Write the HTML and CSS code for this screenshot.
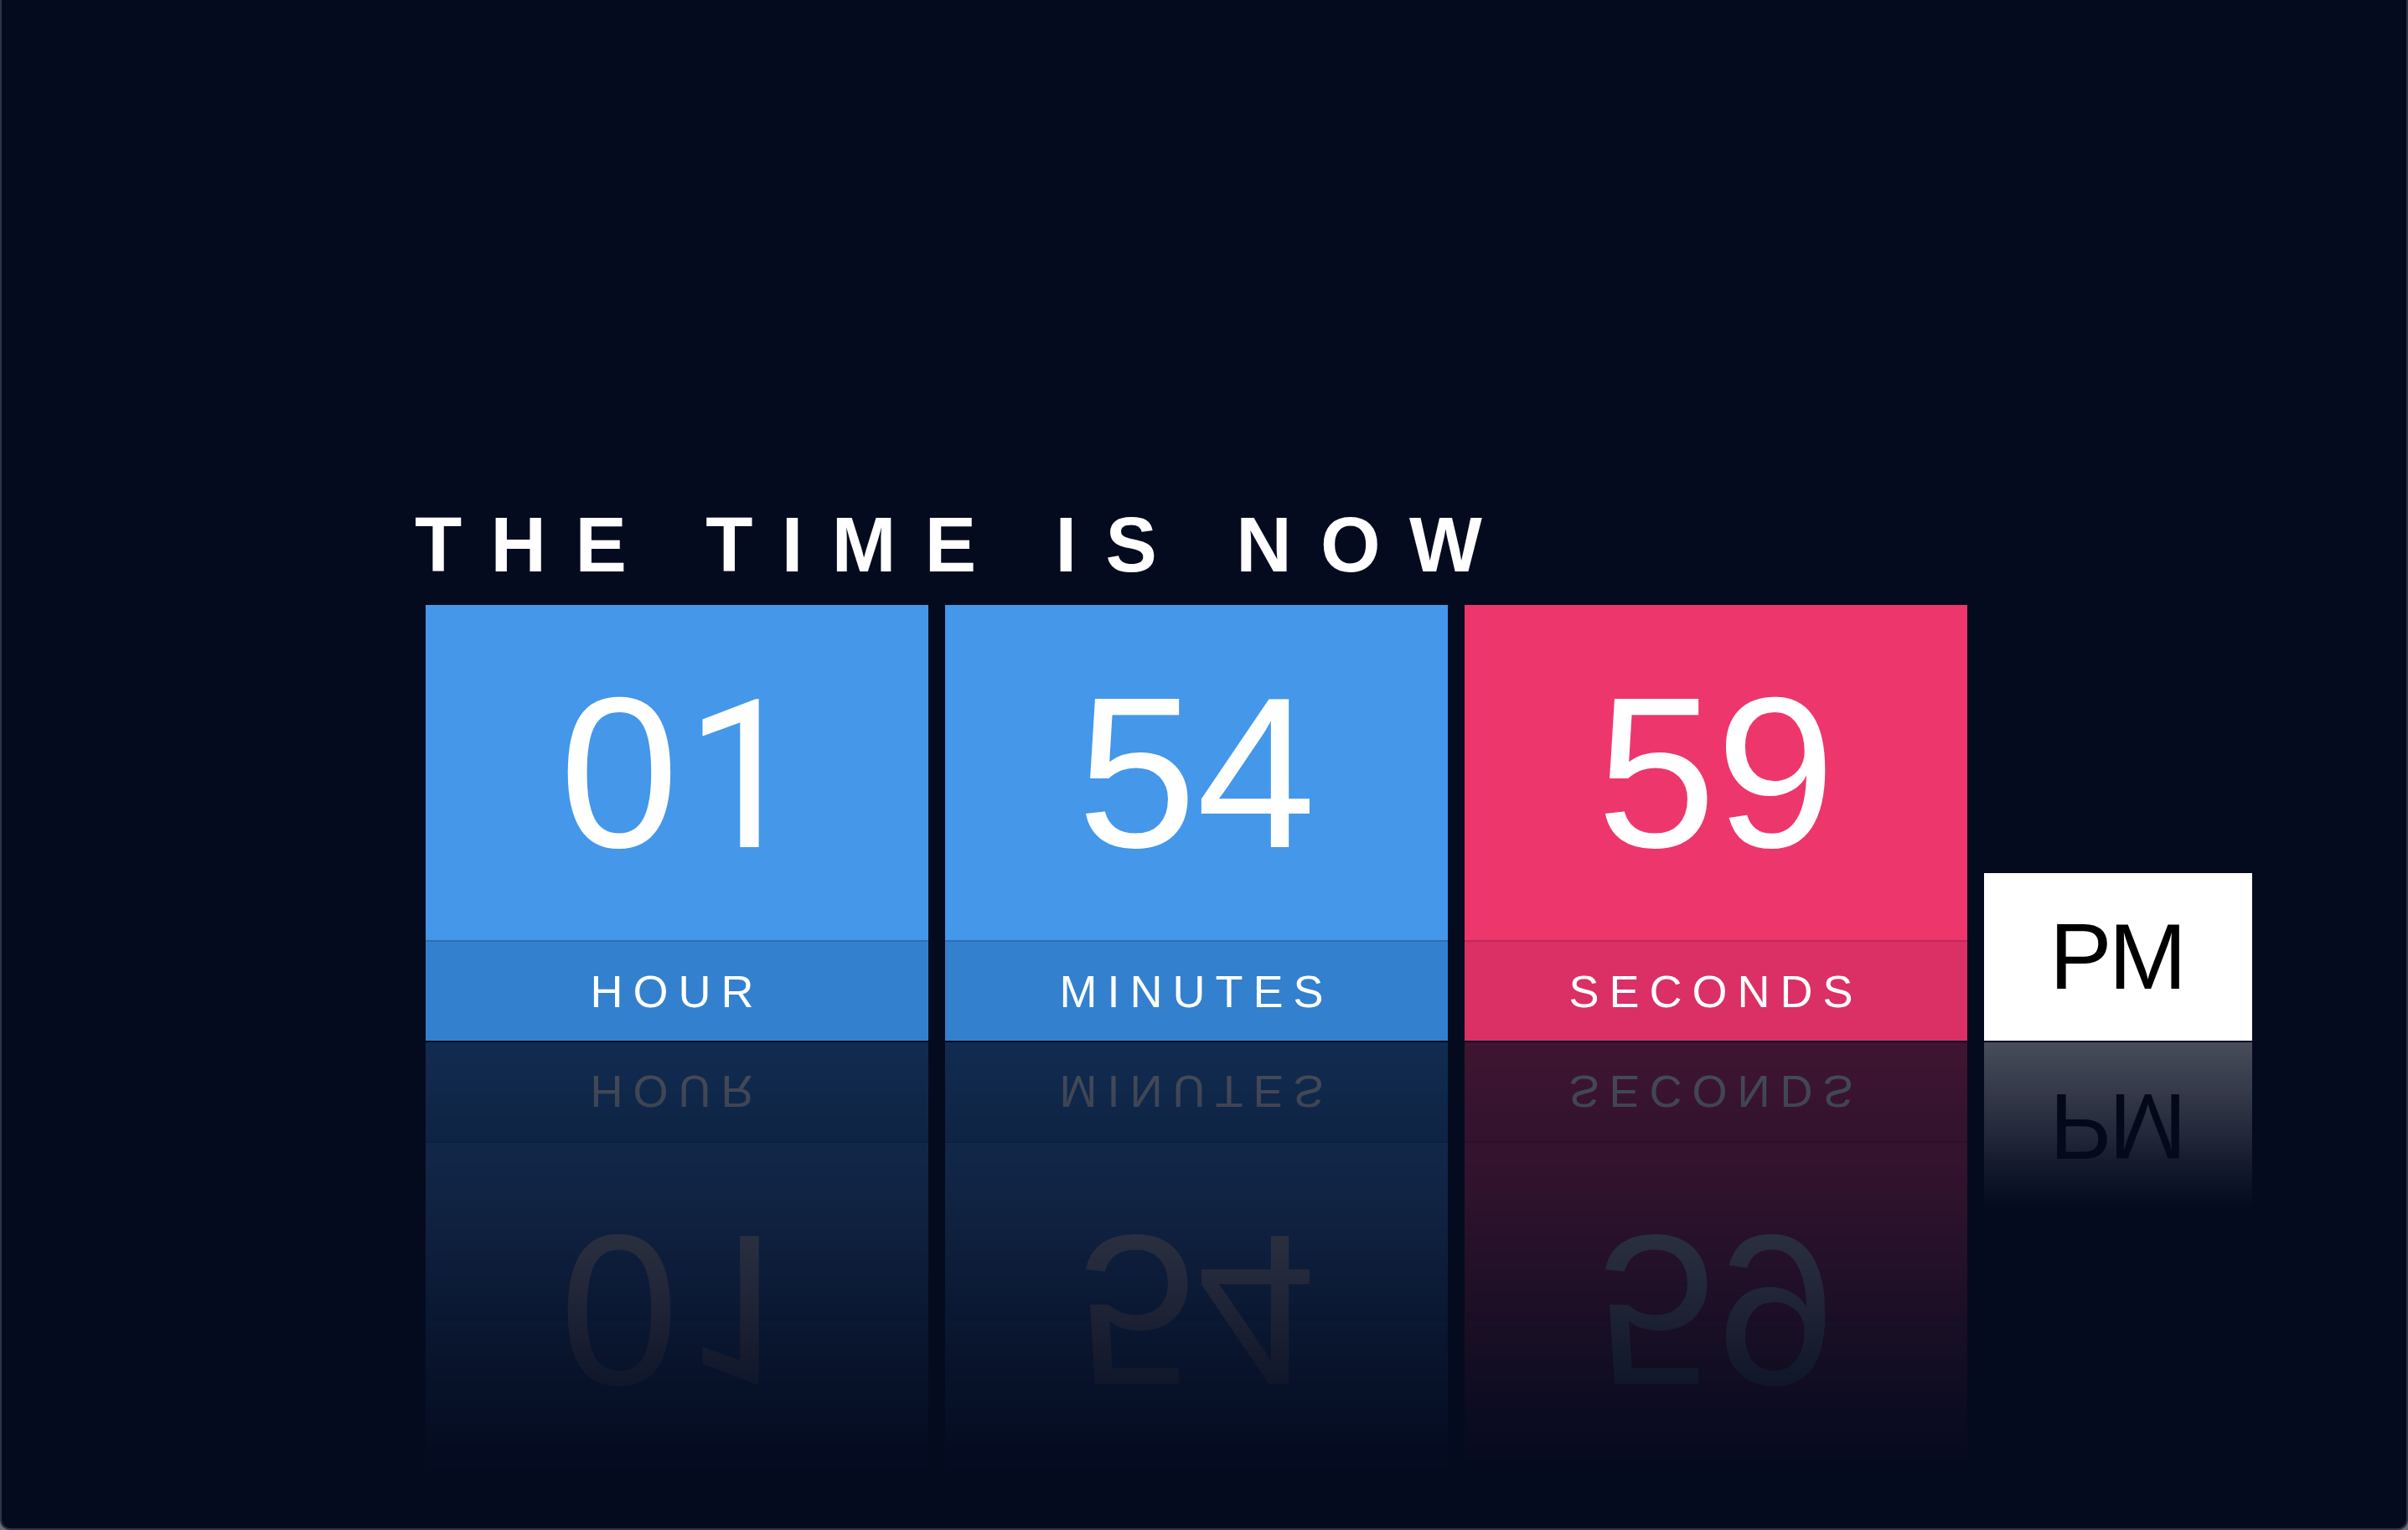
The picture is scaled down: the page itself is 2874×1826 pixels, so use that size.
FILE: index.html
```html
<!DOCTYPE html>
<html lang="en">
<head>
<meta charset="utf-8">
<title>The Time Is Now</title>
<link rel="stylesheet" href="styles.css">
</head>
<body>
<div class="frame">
  <main class="stage">
    <h1 class="title">THE TIME IS NOW</h1>
    <div class="clock">
      <section class="unit unit-blue">
        <div class="value">0<span class="one">1</span></div>
        <div class="label">HOUR</div>
      </section>
      <section class="unit unit-blue">
        <div class="value">54</div>
        <div class="label">MINUTES</div>
      </section>
      <section class="unit unit-pink">
        <div class="value">59</div>
        <div class="label">SECONDS</div>
      </section>
      <section class="meridiem">PM</section>
    </div>
  </main>
</div>
</body>
</html>
```

FILE: styles.css
```css
html {
  background: #6b6f7a;
}
body {
  margin: 0;
  font-family: "Liberation Sans", Arial, Helvetica, sans-serif;
}
.frame {
  box-sizing: border-box;
  width: 2874px;
  height: 1826px;
  background: #050b1f;
  border: 2px solid #2f3445;
  border-top: none;
  border-radius: 0 0 12px 12px;
  overflow: hidden;
}
.stage {
  padding: 604px 0 0 493px;
}
.title {
  margin: 0;
  font-size: 92px;
  line-height: 1;
  font-weight: 700;
  letter-spacing: 34.4px;
  color: #ffffff;
  white-space: nowrap;
}
.clock {
  display: flex;
  align-items: flex-end;
  gap: 20px;
  margin: 26px 0 0 13px;
}
.unit {
  width: 600px;
  height: 520px;
  display: flex;
  flex-direction: column;
  color: #ffffff;
  -webkit-box-reflect: below 2px linear-gradient(to bottom, rgba(0,0,0,0) 0%, rgba(0,0,0,0.06) 25%, rgba(0,0,0,0.15) 55%, rgba(0,0,0,0.28) 100%);
}
.unit-blue { background: #4497e9; }
.unit-pink { background: #ed366c; }
.value {
  flex: 0 0 400px;
  box-sizing: border-box;
  padding-top: 72px;
  display: flex;
  align-items: baseline;
  justify-content: center;
  font-size: 256px;
  line-height: 1;
}
.one {
  font-family: Roboto, "Liberation Sans", sans-serif;
  font-weight: 400;
  font-size: 246px;
  margin-left: 8px;
  margin-right: -8px;
}
.label {
  flex: 0 0 120px;
  box-sizing: border-box;
  border-top: 2px solid rgba(0, 0, 0, 0.13);
  display: flex;
  align-items: center;
  justify-content: center;
  font-size: 54px;
  line-height: 1;
  letter-spacing: 12px;
}
.unit-blue .label { background: #3380cf; }
.unit-pink .label { background: #da3065; }
.meridiem {
  width: 320px;
  height: 200px;
  background: #ffffff;
  color: #000000;
  display: flex;
  align-items: center;
  justify-content: center;
  font-size: 112px;
  line-height: 1;
  letter-spacing: -4px;
  text-indent: -4px;
  -webkit-box-reflect: below 2px linear-gradient(to bottom, rgba(0,0,0,0) 0%, rgba(0,0,0,0.06) 25%, rgba(0,0,0,0.15) 55%, rgba(0,0,0,0.27) 100%);
}
```
